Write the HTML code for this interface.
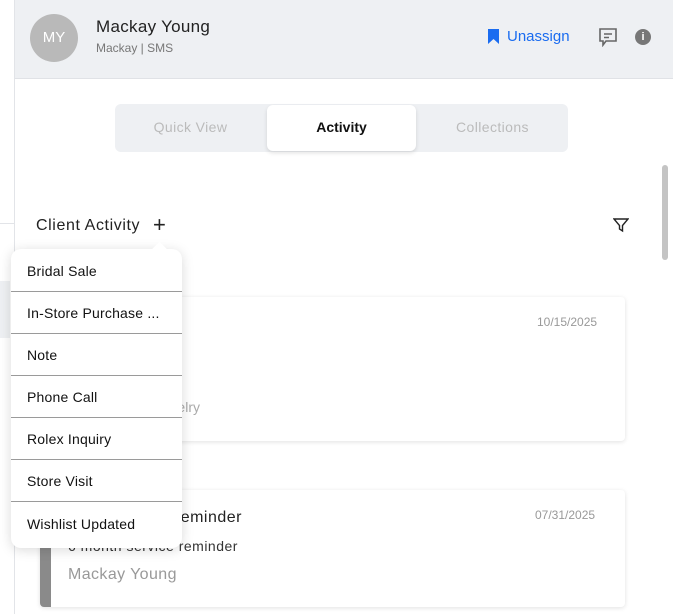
<!DOCTYPE html>
<html><head><style>
*{margin:0;padding:0;box-sizing:border-box}
body{width:673px;height:614px;overflow:hidden;background:#fff;font-family:"Liberation Sans",sans-serif;position:relative;color:#222}
.a{position:absolute}
</style></head><body>
<div class="a" style="left:14px;top:0;width:1px;height:614px;background:#e2e4e8"></div>
<div class="a" style="left:0;top:223px;width:14px;height:1px;background:#e2e4e8"></div>
<div class="a" style="left:0;top:281px;width:10px;height:57px;background:#eef0f3"></div>
<div class="a" style="left:15px;top:0;width:658px;height:79px;background:#eef0f3;border-bottom:1px solid #e0e2e6"></div>
<div class="a" style="left:30px;top:14px;width:48px;height:48px;border-radius:50%;background:#b9b9b9;color:#fff;font-size:15px;line-height:48px;text-align:center">MY</div>
<div class="a" style="left:96px;top:17px;font-size:17px;color:#222;letter-spacing:0.3px">Mackay Young</div>
<div class="a" style="left:96px;top:41px;font-size:12px;color:#777">Mackay | SMS</div>
<svg class="a" style="left:488px;top:29px" width="11" height="15"><path d="M0 0H11V15L5.5 10L0 15Z" fill="#1a6cf0"/></svg>
<div class="a" style="left:507px;top:28px;font-size:15px;color:#1a6cf0">Unassign</div>
<svg class="a" style="left:598px;top:27px" width="20" height="20" fill="none" stroke="#666" stroke-width="1.6"><path d="M2 2H18V14H8L5 18V14H2Z"/><path d="M6 7H14M6 10.5H11"/></svg>
<div class="a" style="left:635px;top:29px;width:16px;height:16px;border-radius:50%;background:#777;color:#fff;font-size:11px;font-weight:bold;text-align:center;line-height:16px">i</div>
<div class="a" style="left:115px;top:104px;width:453px;height:48px;border-radius:6px;background:#eef0f3"></div>
<div class="a" style="left:267px;top:105px;width:149px;height:46px;border-radius:6px;background:#fff;box-shadow:0 2px 4px rgba(0,0,0,.12)"></div>
<div class="a" style="left:115px;top:119px;width:151px;text-align:center;font-size:14px;color:#bbb;letter-spacing:0.4px">Quick View</div>
<div class="a" style="left:267px;top:119px;width:149px;text-align:center;font-size:14px;font-weight:bold;color:#111">Activity</div>
<div class="a" style="left:417px;top:119px;width:151px;text-align:center;font-size:14px;color:#bbb;letter-spacing:0.4px">Collections</div>
<div class="a" style="left:662px;top:165px;width:6px;height:95px;border-radius:3px;background:#c4c4c4"></div>
<div class="a" style="left:36px;top:217px;font-size:16px;color:#222;letter-spacing:0.6px">Client Activity</div>
<div class="a" style="left:153px;top:212px;font-size:22px;color:#222">+</div>
<svg class="a" style="left:613px;top:218px" width="16" height="15" fill="none" stroke="#222" stroke-width="1.4"><path d="M1 1H15L9.5 7.5V13L6.5 11V7.5Z"/></svg>
<div class="a" style="left:40px;top:297px;width:585px;height:144px;border-radius:4px;background:#fff;box-shadow:0 1px 5px rgba(0,0,0,.12)"></div>
<div class="a" style="left:537px;top:315px;font-size:12px;color:#999">10/15/2025</div>
<div class="a" style="left:60px;top:399px;width:140px;text-align:right;font-size:14px;color:#aaa">Fine Jewelry</div>
<div class="a" style="left:40px;top:490px;width:585px;height:117px;border-radius:4px;background:#fff;box-shadow:0 1px 5px rgba(0,0,0,.12);border-left:11px solid #8a8a8a"></div>
<div class="a" style="left:535px;top:508px;font-size:12px;color:#999">07/31/2025</div>
<div class="a" style="left:60px;top:509px;width:182px;text-align:right;font-size:16px;color:#222;letter-spacing:0.5px">Service reminder</div>
<div class="a" style="left:68px;top:538px;font-size:14px;color:#333;letter-spacing:0.5px">6 month service reminder</div>
<div class="a" style="left:68px;top:566px;font-size:16px;color:#999;letter-spacing:0.4px">Mackay Young</div>
<div class="a" style="left:11px;top:249px;width:171px;height:299px;background:#fff;border-radius:10px;box-shadow:0 2px 12px rgba(0,0,0,.15);overflow:hidden;font-size:14px;color:#111;letter-spacing:0.2px">
<div style="height:43px;line-height:45px;padding-left:16px;border-bottom:1px solid #9a9a9a">Bridal Sale</div>
<div style="height:42px;line-height:42px;padding-left:16px;border-bottom:1px solid #9a9a9a">In-Store Purchase ...</div>
<div style="height:42px;line-height:42px;padding-left:16px;border-bottom:1px solid #9a9a9a">Note</div>
<div style="height:42px;line-height:42px;padding-left:16px;border-bottom:1px solid #9a9a9a">Phone Call</div>
<div style="height:42px;line-height:42px;padding-left:16px;border-bottom:1px solid #9a9a9a">Rolex Inquiry</div>
<div style="height:42px;line-height:42px;padding-left:16px;border-bottom:1px solid #9a9a9a">Store Visit</div>
<div style="height:42px;line-height:44px;padding-left:16px">Wishlist Updated</div>
</div>
<div class="a" style="left:154px;top:244px;width:11px;height:11px;background:#fff;transform:rotate(45deg)"></div>
</body></html>
